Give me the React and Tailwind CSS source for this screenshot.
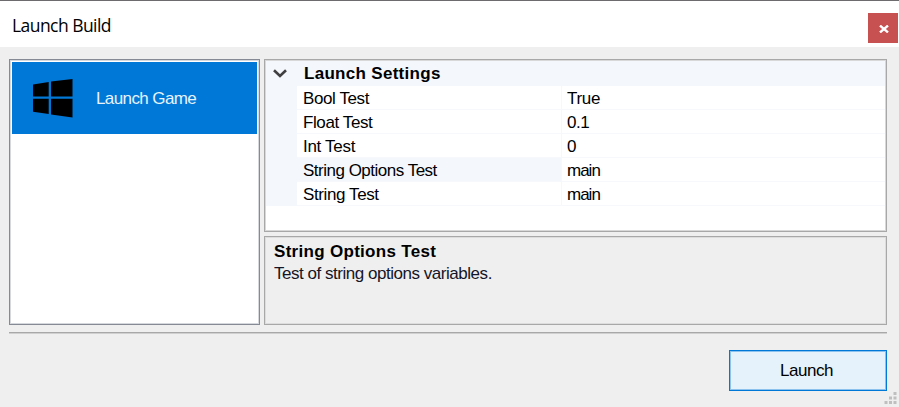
import React from "react";

const settings = [
  { name: "Bool Test", value: "True", spacing: "tracking-[-0.4px]", valueSpacing: "tracking-[-0.3px]" },
  { name: "Float Test", value: "0.1", spacing: "tracking-[-0.4px]", valueSpacing: "tracking-[-0.5px]" },
  { name: "Int Test", value: "0", spacing: "tracking-[-0.3px]", valueSpacing: "tracking-normal" },
  { name: "String Options Test", value: "main", spacing: "tracking-[-0.5px]", valueSpacing: "tracking-[-1px]", selected: true },
  { name: "String Test", value: "main", spacing: "tracking-[-0.4px]", valueSpacing: "tracking-[-1px]" },
];

function TitleBar() {
  return (
    <header className="flex h-[47px] shrink-0 items-start justify-between border-t border-[#6d6b6d] bg-white pl-3 pr-px">
      <h1 className="pt-3 font-['Open_Sans',sans-serif] text-[17.5px] leading-6 tracking-[-0.55px] text-black">Launch Build</h1>
      <button aria-label="Close" className="mt-3 flex h-[30px] w-[30px] items-center justify-center bg-[#c75050]">
        <svg width="10" height="8" viewBox="0 0 10 8" className="mt-px ml-px" fill="none" stroke="#fff" strokeWidth="2.4">
          <path d="M1 0.6 L9 7.4 M9 0.6 L1 7.4" />
        </svg>
      </button>
    </header>
  );
}

function TargetList() {
  return (
    <div className="h-[266px] w-[251px] shrink-0 border border-[#858a94] bg-white p-px shadow-[inset_0_0_0_1px_#d5d8dc]">
      <div className="mt-px ml-px flex h-[72px] w-[245px] items-center bg-[#0078d7]">
        <svg width="40" height="39" viewBox="0 0 40 39" className="ml-[21px] shrink-0" fill="#000">
          <path d="M0 5.6 L15.7 3 V17.6 H0 Z M18 2.6 L39.5 0 V17.6 H18 Z M0 19.8 H15.7 V35 L0 32.8 Z M18 19.8 H39.5 V38.5 L18 35.4 Z" />
        </svg>
        <span className="ml-[23px] whitespace-nowrap pt-px text-[17px] tracking-[-0.6px] text-[#e8f3fc]">Launch Game</span>
      </div>
    </div>
  );
}

function PropertyGrid() {
  return (
    <div className="h-[173px] border border-[#a8a8a8] bg-white shadow-[inset_0_0_0_1px_#d8d8d8]">
      <div className="m-px">
        <div className="flex h-[25px] items-center bg-[#f4f7fc]">
          <svg width="14" height="9" viewBox="0 0 14 9" className="ml-[7px]" fill="none" stroke="#404040" strokeWidth="2.6">
            <path d="M1 1.2 L7 7 L13 1.2" />
          </svg>
          <span className="ml-[17px] pt-px text-[17px] font-bold tracking-[0.3px]">Launch Settings</span>
        </div>
        {settings.map((s) => (
          <div key={s.name} className="flex h-6">
            <div className="w-[31px] shrink-0 bg-[#f4f7fc]" />
            <div className={`flex w-[265px] shrink-0 items-center whitespace-nowrap border-r border-b border-[#f6f8fc] pl-1.5 pt-0.5 text-[17px] ${s.spacing} ${s.selected ? "bg-[#f4f7fc]" : ""}`}>
              {s.name}
            </div>
            <div className={`flex grow items-center border-b border-[#f6f8fc] pl-[5px] pt-0.5 text-[17px] ${s.valueSpacing}`}>{s.value}</div>
          </div>
        ))}
      </div>
    </div>
  );
}

function Description() {
  return (
    <div className="h-[89px] border border-[#a8a8a8] pl-[9px] pt-[3px] shadow-[inset_0_0_0_1px_#dddddd]">
      <div className="text-[17px] font-bold leading-[23px] tracking-[0.3px]">String Options Test</div>
      <div className="text-[17px] leading-[22px] tracking-[-0.47px] text-[#151528]">Test of string options variables.</div>
    </div>
  );
}

function Footer() {
  return (
    <footer className="flex h-[75px] items-start justify-end">
      <button className="mt-[17px] flex h-[41px] w-[158px] items-center justify-center border border-[#0078d7] bg-[#e5f1fb] pr-[3px] pt-px text-[17px] tracking-[-0.5px] shadow-[inset_0_0_0_1px_#8bc2ee]">
        Launch
      </button>
      <svg width="13" height="13" viewBox="0 0 13 13" className="mt-[59px] -ml-[3px] -mr-[10px] shrink-0" fill="#bfbfbf">
        <path d="M9.5 0h3v3h-3z M5 4.5h3v3h-3z M9.5 4.5h3v3h-3z M0.5 9h3v3h-3z M5 9h3v3h-3z M9.5 9h3v3h-3z" />
      </svg>
    </footer>
  );
}

export default function App() {
  return (
    <div className="flex h-[407px] w-[899px] flex-col overflow-hidden bg-[#efefef] font-['Liberation_Sans',sans-serif] text-black">
      <TitleBar />
      <main className="flex grow flex-col pl-[9px] pr-3 pt-3">
        <div className="flex gap-[4px]">
          <TargetList />
          <div className="flex grow flex-col gap-1">
            <PropertyGrid />
            <Description />
          </div>
        </div>
        <div className="mt-[7px] h-px shrink-0 bg-[#a8a8a8] shadow-[0_1px_0_#d0d0d0]" />
        <Footer />
      </main>
    </div>
  );
}
